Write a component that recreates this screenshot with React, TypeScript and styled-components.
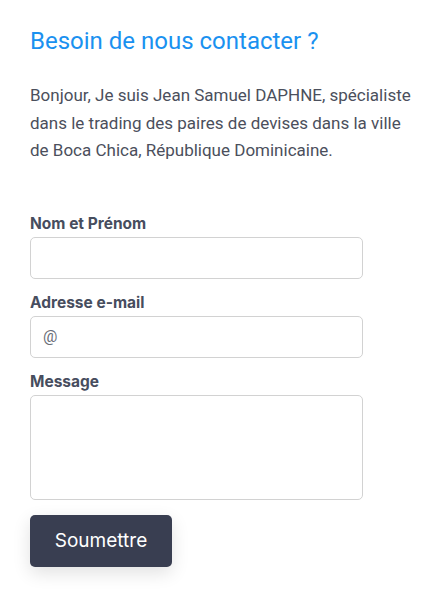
import React from "react";
import styled, { createGlobalStyle } from "styled-components";

const Global = createGlobalStyle`
  html, body { margin: 0; padding: 0; background: #fff; }
  * { box-sizing: border-box; }
`;

const Page = styled.div`
  padding: 26px 30px 40px 30px;
  font-family: Roboto, "Liberation Sans", sans-serif;
  width: 422px;
`;

const Title = styled.h2`
  margin: 0;
  font-family: Roboto, sans-serif;
  font-weight: 400;
  font-size: 24px;
  line-height: 30px;
  color: #1a91f0;
`;

const Intro = styled.p`
  margin: 26px 0 0 0;
  font-size: 17px;
  line-height: 27.5px;
  color: #4b4f5c;
  width: 392px;
`;

const Form = styled.form`
  margin-top: 49px;
  display: flex;
  flex-direction: column;
  width: 333px;
`;

const Label = styled.label`
  font-family: Inter, "Noto Sans", sans-serif;
  font-weight: 700;
  font-size: 15.5px;
  line-height: 20px;
  color: #474d5e;
  margin-bottom: 3px;
`;

const Input = styled.input`
  height: 42px;
  width: 100%;
  border: 1px solid #d2d2d2;
  border-radius: 5px;
  padding: 0 12px;
  font-family: Roboto, sans-serif;
  font-size: 16px;
  color: #4b4f5c;
  margin-bottom: 14px;
  outline: none;
  &::placeholder { color: #6a6e78; }
`;

const Area = styled.textarea`
  height: 105px;
  width: 100%;
  border: 1px solid #d2d2d2;
  border-radius: 5px;
  padding: 10px 12px;
  resize: none;
  outline: none;
  font-family: Roboto, sans-serif;
  margin-bottom: 15px;
  display: block;
`;

const Button = styled.button`
  align-self: flex-start;
  width: 142px;
  height: 52px;
  border: none;
  border-radius: 5px;
  background: #393e51;
  color: #fff;
  font-family: Inter, "Noto Sans", sans-serif;
  font-size: 19px;
  font-weight: 400;
  box-shadow: 0 6px 18px rgba(0, 0, 0, 0.12);
  cursor: pointer;
`;

export default function App() {
  return (
    <Page>
      <Global />
      <Title>Besoin de nous contacter ?</Title>
      <Intro>
        Bonjour, Je suis Jean Samuel DAPHNE, spécialiste dans le trading des paires de devises dans la ville de Boca Chica, République Dominicaine.
      </Intro>
      <Form onSubmit={(e) => e.preventDefault()}>
        <Label htmlFor="nom">Nom et Prénom</Label>
        <Input id="nom" type="text" />
        <Label htmlFor="email">Adresse e-mail</Label>
        <Input id="email" type="email" placeholder="@" />
        <Label htmlFor="msg">Message</Label>
        <Area id="msg" />
        <Button type="submit">Soumettre</Button>
      </Form>
    </Page>
  );
}
